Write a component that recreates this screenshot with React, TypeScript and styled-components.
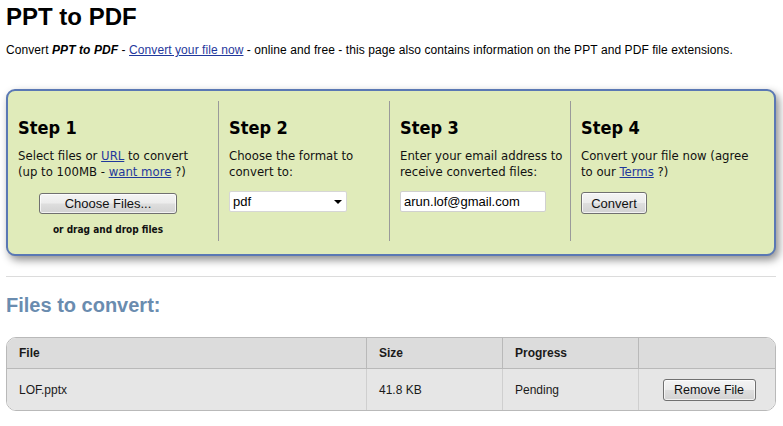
import React from 'react'
import styled, { createGlobalStyle } from 'styled-components'

const GlobalStyle = createGlobalStyle`
    body {
        margin: 0;
        background: #ffffff;
        font-family: 'Liberation Sans', Arial, sans-serif;
        color: #000;
    }
`

const Page = styled.div`
    padding: 0 7px 0 6px;
`

const Title = styled.h1`
    margin: 3px 0 0;
    font-size: 24px;
    line-height: 28px;
    font-weight: bold;
`

const Intro = styled.p`
    margin: 11px 0 0;
    font-size: 12px;
    line-height: 16px;
    letter-spacing: 0.08px;
`

const Link = styled.a`
    color: #1f389c;
    text-decoration: underline;
`

const StepsBox = styled.div`
    margin-top: 31px;
    display: grid;
    grid-template-columns: 211px 171px 181px 1fr;
    padding: 10px 0 13px;
    background: #e0ebba;
    border: 2px solid #5a78b4;
    border-radius: 9px;
    box-shadow: 3px 4px 8px rgba(0, 0, 0, 0.45);
    font-family: 'DejaVu Sans Condensed', 'Noto Sans', sans-serif;
`

const Step = styled.div<{ $last?: boolean; $padRight?: number }>`
    height: 140px;
    padding: 0 ${(p) => p.$padRight ?? 10}px 0 10px;
    border-right: ${(p) => (p.$last ? 'none' : '1px solid #9a9a9a')};
    display: flex;
    flex-direction: column;
`

const StepTitle = styled.h2`
    margin: 16px 0 0;
    font-size: 18px;
    line-height: 22px;
    font-weight: bold;
`

const StepText = styled.div`
    margin-top: 9px;
    font-size: 13px;
    line-height: 16px;
    color: #111;
    white-space: nowrap;
`

const Controls = styled.div<{ $center?: boolean; $shift?: number }>`
    margin-top: ${(p) => 12 + (p.$shift ?? 0)}px;
    display: flex;
    flex-direction: column;
    align-items: ${(p) => (p.$center ? 'center' : 'flex-start')};
`

const Button = styled.button<{ $w: number; $h: number; $size?: number }>`
    width: ${(p) => p.$w}px;
    height: ${(p) => p.$h}px;
    padding: 0;
    border: 1px solid #707070;
    border-radius: 3px;
    background: linear-gradient(#f4f4f4 0%, #ececec 48%, #dedede 52%, #d2d2d2 100%);
    font-family: 'Liberation Sans', Arial, sans-serif;
    font-size: ${(p) => p.$size ?? 13}px;
    color: #111;
    box-shadow: inset 0 0 0 1px rgba(255, 255, 255, 0.7);
`

const DropHint = styled.div`
    margin-top: 10px;
    font-size: 10px;
    font-weight: bold;
    color: #111;
`

const SelectWrap = styled.div`
    position: relative;
    width: 118px;
    height: 21px;
`

const FormatSelect = styled.select`
    appearance: none;
    width: 100%;
    height: 100%;
    padding: 0 0 0 3px;
    border: 1px solid #d6d6d6;
    border-radius: 2px;
    background: #fff;
    font-family: 'Liberation Sans', Arial, sans-serif;
    font-size: 13px;
    color: #000;
`

const Arrow = styled.svg`
    position: absolute;
    right: 5px;
    top: 9px;
    pointer-events: none;
`

const EmailInput = styled.input`
    width: 146px;
    height: 21px;
    box-sizing: border-box;
    padding: 0 3px;
    border: 1px solid #d0d0d0;
    border-radius: 2px;
    background: #fff;
    font-family: 'Liberation Sans', Arial, sans-serif;
    font-size: 13px;
    color: #000;
`

const Rule = styled.hr`
    margin: 20px 0 0;
    border: 0;
    border-top: 1px solid #dcdcdc;
`

const SectionTitle = styled.h2`
    margin: 16px 0 0;
    font-size: 20px;
    line-height: 24px;
    font-weight: bold;
    color: #6a8caf;
`

const Table = styled.table`
    margin-top: 20px;
    width: 100%;
    table-layout: fixed;
    border-collapse: separate;
    border-spacing: 0;
    border: 1px solid #b9b9b9;
    border-radius: 10px;
    overflow: hidden;
    font-size: 12px;
    color: #1a1a1a;
`

const Th = styled.th<{ $last?: boolean }>`
    height: 31px;
    padding: 0 0 0 12px;
    text-align: left;
    font-weight: bold;
    background: #dcdcdc;
    border-bottom: 1px solid #b9b9b9;
    border-right: ${(p) => (p.$last ? 'none' : '1px solid #b9b9b9')};
    box-sizing: border-box;
`

const Td = styled.td<{ $last?: boolean; $center?: boolean }>`
    height: 41px;
    padding: 0 0 0 ${(p) => (p.$center ? 4 : 12)}px;
    text-align: ${(p) => (p.$center ? 'center' : 'left')};
    background: #e6e6e6;
    border-right: ${(p) => (p.$last ? 'none' : '1px solid #cfcfcf')};
    box-sizing: border-box;
`

export default function App() {
    return (
        <>
            <GlobalStyle />
            <Page>
                <Title>PPT to PDF</Title>
                <Intro>
                    Convert <b><i>PPT to PDF</i></b> - <Link href="#">Convert your file now</Link> - online and free - this page also contains information on the PPT and PDF file extensions.
                </Intro>

                <StepsBox>
                    <Step $padRight={20}>
                        <StepTitle>Step 1</StepTitle>
                        <StepText>
                            Select files or <Link href="#">URL</Link> to convert
                            <br />
                            (up to 100MB - <Link href="#">want more</Link> ?)
                        </StepText>
                        <Controls $center $shift={1}>
                            <Button $w={138} $h={21}>Choose Files...</Button>
                            <DropHint>or drag and drop files</DropHint>
                        </Controls>
                    </Step>
                    <Step>
                        <StepTitle>Step 2</StepTitle>
                        <StepText>
                            Choose the format to
                            <br />
                            convert to:
                        </StepText>
                        <Controls $shift={-1}>
                            <SelectWrap>
                                <FormatSelect defaultValue="pdf">
                                    <option value="pdf">pdf</option>
                                </FormatSelect>
                                <Arrow width="8" height="4" viewBox="0 0 8 4">
                                    <path d="M0 0h8L4 4z" fill="#000" />
                                </Arrow>
                            </SelectWrap>
                        </Controls>
                    </Step>
                    <Step>
                        <StepTitle>Step 3</StepTitle>
                        <StepText>
                            Enter your email address to
                            <br />
                            receive converted files:
                        </StepText>
                        <Controls $shift={-1}>
                            <EmailInput defaultValue="arun.lof@gmail.com" />
                        </Controls>
                    </Step>
                    <Step $last>
                        <StepTitle>Step 4</StepTitle>
                        <StepText>
                            Convert your file now (agree
                            <br />
                            to our <Link href="#">Terms</Link> ?)
                        </StepText>
                        <Controls>
                            <Button $w={66} $h={22}>Convert</Button>
                        </Controls>
                    </Step>
                </StepsBox>

                <Rule />
                <SectionTitle>Files to convert:</SectionTitle>

                <Table>
                    <colgroup>
                        <col style={{ width: 360 }} />
                        <col style={{ width: 136 }} />
                        <col style={{ width: 136 }} />
                        <col />
                    </colgroup>
                    <thead>
                        <tr>
                            <Th>File</Th>
                            <Th>Size</Th>
                            <Th>Progress</Th>
                            <Th $last />
                        </tr>
                    </thead>
                    <tbody>
                        <tr>
                            <Td>LOF.pptx</Td>
                            <Td>41.8 KB</Td>
                            <Td>Pending</Td>
                            <Td $last $center>
                                <Button $w={93} $h={22} $size={12.5}>Remove File</Button>
                            </Td>
                        </tr>
                    </tbody>
                </Table>
            </Page>
        </>
    )
}
